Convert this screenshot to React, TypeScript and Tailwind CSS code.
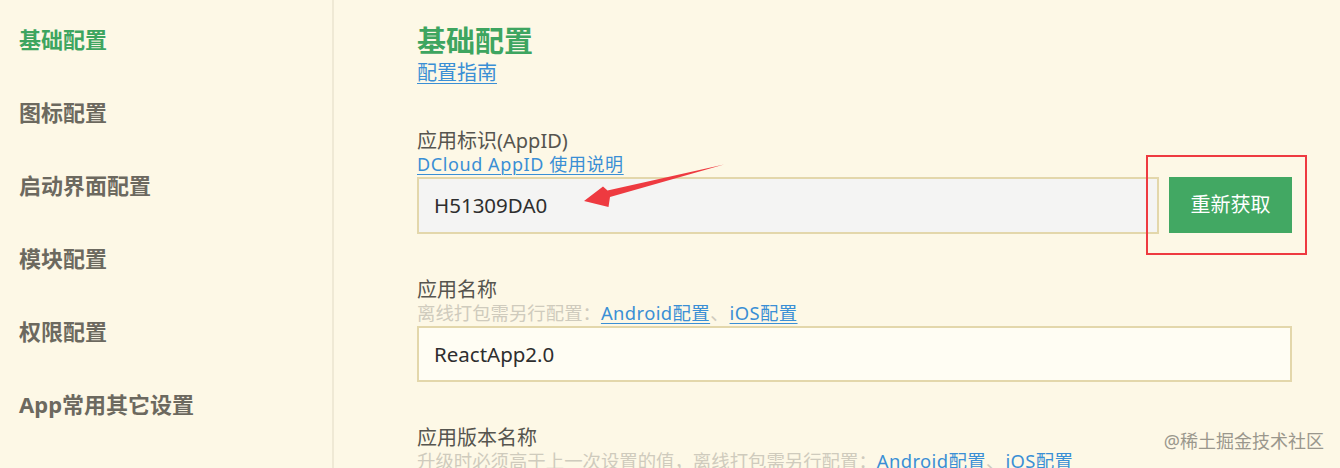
import React from 'react';

const FONT = '"Noto Sans", "Noto Sans CJK SC", sans-serif';

const navItems = ['基础配置', '图标配置', '启动界面配置', '模块配置', '权限配置', 'App常用其它设置'];

const Link: React.FC<{ children: React.ReactNode }> = ({ children }) => (
  <a className="text-[#3a8fd5] underline underline-offset-[3px] decoration-1 cursor-pointer">{children}</a>
);

const Hint: React.FC<{ text: string }> = ({ text }) => (
  <div className="text-[18.4px] leading-[22px] text-[#cfcbbd] whitespace-nowrap">
    {text}
    <span className="tracking-[0.4px]">
      <Link>Android配置</Link>
    </span>
    <span className="mr-[1px]">、</span>
    <span className="tracking-[0.4px]">
      <Link>iOS配置</Link>
    </span>
  </div>
);

export default function App() {
  return (
    <div
      className="relative flex h-[468px] w-[1340px] overflow-hidden bg-[#fdf8e6]"
      style={{ fontFamily: FONT }}
    >
      {/* Sidebar */}
      <aside className="w-[334px] shrink-0 border-r-2 border-[#efe9d5] pt-[3px] pl-[19px]">
        {navItems.map((item, i) => (
          <div
            key={item}
            className={`flex h-[73px] items-center text-[22px] font-bold ${
              i === 0 ? 'text-[#3ea560]' : 'text-[#6c695f]'
            }`}
          >
            {item}
          </div>
        ))}
      </aside>

      {/* Main */}
      <main className="flex-1 pl-[83px] pr-[48px] pt-[25px] text-[#56554f]">
        <h1 className="text-[29px] font-bold leading-[32px] text-[#3ea560]">基础配置</h1>
        <div className="text-[20px] leading-[32px]">
          <Link>配置指南</Link>
        </div>

        {/* AppID */}
        <div className="mt-[40px] text-[20px] leading-[24px]">应用标识(AppID)</div>
        <div className="text-[18px] leading-[22px] tracking-[0.6px]">
          <Link>DCloud AppID 使用说明</Link>
        </div>
        <div className="mt-[2px] flex items-start gap-[10px]">
          <div className="flex h-[57px] flex-1 items-center border-2 border-[#e3d7ab] bg-[#f4f4f3] pl-[15px] text-[20.5px] text-[#2e2e2e]">
            H51309DA0
          </div>
          <div className="relative">
            <button className="h-[56px] w-[123px] bg-[#42a863] text-[20px] text-white">重新获取</button>
            <div className="pointer-events-none absolute -left-[23px] -top-[22px] -right-[15px] -bottom-[22px] border-2 border-[#ee3a40]" />
          </div>
        </div>

        {/* App name */}
        <div className="mt-[44px] text-[20px] leading-[24px]">应用名称</div>
        <Hint text="离线打包需另行配置：" />
        <div className="mt-[2px] flex h-[56px] items-center border-2 border-[#e3d7ab] bg-[#fffdf3] pl-[15px] text-[20.5px] text-[#2e2e2e]">
          ReactApp2.0
        </div>

        {/* Version name */}
        <div className="mt-[44px] text-[20px] leading-[24px]">应用版本名称</div>
        <Hint text="升级时必须高于上一次设置的值，离线打包需另行配置：" />
      </main>

      {/* Annotation arrow */}
      <svg className="pointer-events-none absolute left-0 top-0" width="1340" height="468" viewBox="0 0 1340 468">
        <polygon points="584,201 603,186.5 607.5,190.5 724,164.5 610,197 608.5,207" fill="#ee3a40" />
      </svg>

      {/* Watermark */}
      <div className="pointer-events-none absolute right-[16px] top-[429px] text-[18px] leading-[24px] text-[#9a978d]">
        @稀土掘金技术社区
      </div>
    </div>
  );
}
